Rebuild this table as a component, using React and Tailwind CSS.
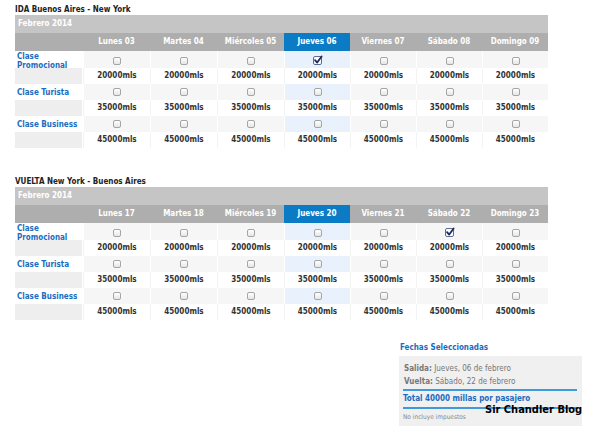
import React from "react";

const FONT = { fontFamily: '"DejaVu Sans Condensed", "DejaVu Sans", sans-serif' };

function Box({ checked }) {
  if (checked) {
    return (
      <span className="relative inline-block w-[9px] h-[9px] border border-[#5b6b93] rounded-[2px] bg-white">
        <svg viewBox="0 0 10 10" className="absolute left-[-1px] top-[-2px] w-[10px] h-[10px]">
          <path d="M2 5.2 L4.2 7.6 L8.6 1.4" fill="none" stroke="#1c2a63" strokeWidth="1.8" strokeLinecap="round" strokeLinejoin="round" />
        </svg>
      </span>
    );
  }
  return (
    <span className="inline-block w-[8px] h-[8px] border border-[#a5a5a5] rounded-[2px] bg-gradient-to-b from-white to-[#e6e6e6]" />
  );
}

const COLS = "grid grid-cols-[68px_67px_67px_67px_66px_66px_66px_66px]";

function Table({ title, days, sel, checked, className }) {
  const classes = [
    { name: ["Clase", "Promocional"], price: "20000mls" },
    { name: ["Clase Turista"], price: "35000mls" },
    { name: ["Clase Business"], price: "45000mls" },
  ];
  return (
    <div className={className}>
      <div className="h-[10px] text-[8px] leading-[10px] font-bold text-[#222]">{title}</div>
      <div className="w-[533px]">
        <div className="h-[18px] bg-[#c5c5c5] text-white text-[8px] font-bold leading-[18px] pl-[3px]">Febrero 2014</div>
        <div className={`${COLS} h-[18px] bg-[#aeaeae]`}>
          <div />
          {days.map((d, i) => (
            <div
              key={d}
              className={`flex items-center justify-center text-white text-[8px] font-bold ${i === sel ? "bg-[#0b7bc6]" : ""}`}
            >
              {d}
            </div>
          ))}
        </div>
        {classes.map((c, ci) => (
          <React.Fragment key={ci}>
            <div className={`${COLS} ${ci === 0 ? "h-[17px]" : "h-[16px]"}`}>
              <div className={`bg-white pl-[2px] text-[#1a6cc0] text-[8px] font-bold leading-[9px] ${c.name.length > 1 ? "pt-[1px]" : "flex items-center"}`}>
                {c.name.length > 1 ? (
                  <div>
                    <div>{c.name[0]}</div>
                    <div>{c.name[1]}</div>
                  </div>
                ) : (
                  c.name[0]
                )}
              </div>
              {days.map((d, i) => (
                <div
                  key={d}
                  className={`flex items-center justify-center border-l border-white ${i === sel ? "bg-[#e9f1fc]" : "bg-[#f6f6f6]"}`}
                >
                  <Box checked={checked && checked[0] === ci && checked[1] === i} />
                </div>
              ))}
            </div>
            <div className={`${COLS} h-[16px]`}>
              <div className="bg-[#eeeeee] mr-[1px]" />
              {days.map((d, i) => (
                <div
                  key={d}
                  className="flex items-center justify-center bg-white border-l border-[#f3f3f3] text-[8px] font-bold text-[#333]"
                >
                  {c.price}
                </div>
              ))}
            </div>
          </React.Fragment>
        ))}
      </div>
    </div>
  );
}

export default function App() {
  return (
    <div className="relative w-[590px] h-[432px] bg-white overflow-hidden" style={FONT}>
      <div className="pl-[15px] pt-[5px]">
        <Table
          title="IDA Buenos Aires - New York"
          days={["Lunes 03", "Martes 04", "Miércoles 05", "Jueves 06", "Viernes 07", "Sábado 08", "Domingo 09"]}
          sel={3}
          checked={[0, 3]}
        />
        <Table
          className="mt-[29px]"
          title="VUELTA New York - Buenos Aires"
          days={["Lunes 17", "Martes 18", "Miércoles 19", "Jueves 20", "Viernes 21", "Sábado 22", "Domingo 23"]}
          sel={3}
          checked={[0, 5]}
        />
      </div>
      <div className="ml-[399px] mt-[22px] w-[183px]">
        <div className="h-[14px] pl-[1px] text-[8px] font-bold text-[#1a6cc0] leading-[12px]">Fechas Seleccionadas</div>
        <div className="bg-[#f0f0f0] h-[70px] px-[4px] pt-[6px]">
          <div className="h-[13px] leading-[13px] text-[8px] text-[#777] pl-[1px]">
            <span className="font-bold">Salida:</span> Jueves, 06 de febrero
          </div>
          <div className="h-[13px] leading-[13px] text-[8px] text-[#777] pl-[1px]">
            <span className="font-bold">Vuelta:</span> Sábado, 22 de febrero
          </div>
          <div className="h-[2px] bg-[#3d9ade] mt-[1px] mr-[1px]" />
          <div className="h-[16px] leading-[16px] text-[8px] font-bold text-[#1a6cc0]">Total 40000 millas por pasajero</div>
          <div className="h-[2px] bg-[#3d9ade] mr-[1px]" />
          <div className="h-[16px] leading-[16px] text-[6.5px] text-[#888]">No incluye impuestos</div>
        </div>
      </div>
      <div className="absolute left-[485px] top-[403px] text-[11px] font-bold text-black leading-[14px]">Sir Chandler Blog</div>
    </div>
  );
}
